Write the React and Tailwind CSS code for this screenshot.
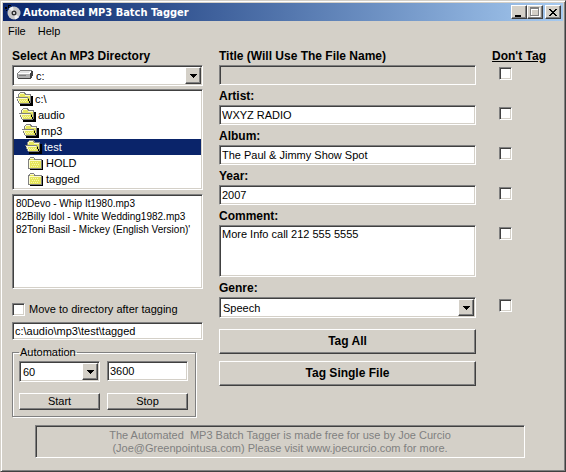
const sunken =
    'border border-t-[#808080] border-l-[#808080] border-r-white border-b-white shadow-[inset_1px_1px_#404040,inset_-1px_-1px_#d4d0c8]';
const raised =
    'border border-t-white border-l-white border-r-[#404040] border-b-[#404040] shadow-[inset_-1px_-1px_#808080]';

function OpenFolder() {
    return (
        <svg width="17" height="14" viewBox="0 0 17 14" shapeRendering="crispEdges" aria-hidden="true">
            <path d="M15 4h2v10H4v-2h11z" fill="#000" />
            <path d="M2 2h1V1h1V0h5v1h1v1h5v10H4L2 6z" fill="#808080" />
            <path d="M3 2h1V1h4v1h1v1h5v9H5L3 6z" fill="#e6e65c" />
            <path d="M4 1h4v1H4zM3 2h1v2H3zM9 3h5v1H9z" fill="#fcfcd0" />
            <path d="M0 5h12l3 7H3z" fill="#808080" />
            <path d="M1 6h11v1l2 4H4L3 9z" fill="#e6e65c" />
            <path d="M1 6h10v1H1zM2 7h1v2H2zM3 9h1v2H3z" fill="#fcfcd0" />
            <path d="M4 8h1v1H4zM6 8h1v1H6zM8 8h1v1H8zM10 8h1v1h-1zM5 9h1v1H5zM7 9h1v1H7zM9 9h1v1H9z" fill="#f8f8a8" />
            <path d="M12 7h1v2h-1zM13 9h1v2h-1zM14 11h1v1h-1z" fill="#000" />
        </svg>
    );
}

function ClosedFolder() {
    return (
        <svg width="15" height="13" viewBox="0 0 15 13" shapeRendering="crispEdges" aria-hidden="true">
            <path d="M2 3h13v10H2z" fill="#000" />
            <path d="M0 2h1V1h1V0h4v1h1v1h7v10H0z" fill="#808080" />
            <path d="M1 3h12v8H1zM2 1h4v2H2z" fill="#e6e65c" />
            <path d="M1 3h12v1H2v7H1zM2 1h4v1H2z" fill="#fcfcd0" />
            <path d="M3 5h1v1H3zM5 5h1v1H5zM7 5h1v1H7zM9 5h1v1H9zM4 7h1v1H4zM6 7h1v1H6zM8 7h1v1H8zM10 7h1v1h-1zM3 9h1v1H3zM5 9h1v1H5zM7 9h1v1H7zM9 9h1v1H9z" fill="#f8f8a8" />
        </svg>
    );
}

function DriveIcon() {
    return (
        <svg width="17" height="10" viewBox="0 0 17 10" shapeRendering="crispEdges" aria-hidden="true">
            <path d="M3 0h11l-3 4H0z" fill="#e4e4e4" />
            <path d="M3 0h12v1H3zM2 1h1v1H2zM1 2h1v1H1zM0 3h1v5H0z" fill="#808080" />
            <path d="M1 3h12v5H1z" fill="#b0b0b0" />
            <path d="M1 3h12v1H1z" fill="#fff" />
            <path d="M2 5h7v1H2z" fill="#808080" />
            <path d="M1 8h13v1H1zM13 3h1v5h-1zM14 1h1v7h-1zM15 1h1v5h-1z" fill="#404040" />
        </svg>
    );
}

function DiscIcon() {
    return (
        <svg width="16" height="16" viewBox="0 0 16 16" aria-hidden="true">
            <circle cx="9" cy="9" r="6.500" fill="#c8c8c8" />
            <path d="M9 9 4 4.500a7 7 0 0 1 4-2zM9 9l5 4a7 7 0 0 1-4 2.500z" fill="#efefef" />
            <circle cx="9" cy="9" r="2.500" fill="#303030" />
            <circle cx="9" cy="9" r="1" fill="#fff" />
            <path d="M0 3h2v2H0zM3 1h1v3H3zM4 1h2v1H4zM1 6h1v1H1z" fill="#000" />
        </svg>
    );
}

function Dropdown({ className = '', label, id, value, options, children }) {
    return (
        <div className={`relative h-[21px] bg-white ${sunken} ${className}`}>
            {children}
            <select
                id={id}
                aria-label={label}
                defaultValue={value}
                className={`block h-full w-full appearance-none bg-transparent pt-px pr-5 outline-none ${children ? 'pl-[23px]' : 'pl-[3px]'}`}
            >
                {options.map((o) => (
                    <option key={o}>{o}</option>
                ))}
            </select>
            <span
                className={`pointer-events-none absolute top-px right-px bottom-px flex w-4 items-center justify-center bg-[#d4d0c8] ${raised}`}
            >
                <svg width="7" height="4" viewBox="0 0 7 4" shapeRendering="crispEdges">
                    <path d="M0 0h7v1H0zM1 1h5v1H1zM2 2h3v1H2zM3 3h1v1H3z" />
                </svg>
            </span>
        </div>
    );
}

function Check({ id, label }) {
    return (
        <input
            id={id}
            type="checkbox"
            aria-label={label}
            className={`h-[13px] w-[13px] shrink-0 appearance-none bg-white checked:bg-[#0a246a] ${sunken}`}
        />
    );
}

function Field({ id, label, children }) {
    return (
        <div>
            <label htmlFor={id} className="block h-4 text-[12px] leading-[14px] font-bold">
                {label}
            </label>
            <div className="flex items-start">
                <div className="min-w-0 flex-1">{children}</div>
                <div className="flex w-[87px] justify-end pt-[2px] pr-[51px]">
                    <Check label={`Don't tag ${id}`} />
                </div>
            </div>
        </div>
    );
}

function TextBox({ className = '', ...props }) {
    return <input type="text" className={`block w-full px-[2px] outline-none ${sunken} ${className}`} {...props} />;
}

function PushButton({ className, children }) {
    return (
        <button type="button" className={`flex items-center justify-center ${raised} ${className}`}>
            {children}
        </button>
    );
}

const folders = [
    { name: 'c:\\', indent: 'pl-[2px]', open: true },
    { name: 'audio', indent: 'pl-[5px]', open: true },
    { name: 'mp3', indent: 'pl-[8px]', open: true },
    { name: 'test', indent: 'pl-[11px]', open: true, selected: true },
    { name: 'HOLD', indent: 'pl-[14px]' },
    { name: 'tagged', indent: 'pl-[14px]' },
];

const files = [
    '80Devo - Whip It1980.mp3',
    '82Billy Idol - White Wedding1982.mp3',
    "82Toni Basil - Mickey (English Version)'",
];

function TitleBar() {
    return (
        <header className="flex h-[18px] items-center bg-linear-to-r from-[#0a246a] to-[#a6caf0] px-[2px] text-white">
            <DiscIcon />
            <h1 className="ml-[2px] flex-1 font-['DejaVu_Sans_Condensed','DejaVu_Sans',sans-serif] text-[11px] font-bold whitespace-nowrap">
                Automated MP3 Batch Tagger
            </h1>
            <div className="flex text-black">
                <PushButton className="h-[14px] w-4 bg-[#d4d0c8]">
                    <svg width="10" height="10" viewBox="0 0 10 10" shapeRendering="crispEdges" role="img" aria-label="Minimize">
                        <path d="M1 8h6v2H1z" />
                    </svg>
                </PushButton>
                <PushButton className="h-[14px] w-4 bg-[#d4d0c8]">
                    <svg width="10" height="10" viewBox="0 0 10 10" shapeRendering="crispEdges" role="img" aria-label="Maximize">
                        <path d="M1 1h9v9H1zM2 3v6h7V3z" fill="#fff" fillRule="evenodd" />
                        <path d="M0 0h9v9H0zM1 2v6h7V2z" fill="#808080" fillRule="evenodd" />
                    </svg>
                </PushButton>
                <PushButton className="ml-[2px] h-[14px] w-4 bg-[#d4d0c8]">
                    <svg width="8" height="7" viewBox="0 0 8 7" shapeRendering="crispEdges" role="img" aria-label="Close">
                        <path d="M0 0h2v1H0zM6 0h2v1H6zM1 1h2v1H1zM5 1h2v1H5zM2 2h4v1H2zM3 3h2v1H3zM2 4h4v1H2zM1 5h2v1H1zM5 5h2v1H5zM0 6h2v1H0zM6 6h2v1H6z" />
                    </svg>
                </PushButton>
            </div>
        </header>
    );
}

export default function App() {
    return (
        <div className="min-h-screen border border-t-[#d4d0c8] border-r-[#404040] border-b-[#404040] border-l-[#d4d0c8] bg-[#d4d0c8] p-[2px] font-['Liberation_Sans',Arial,sans-serif] text-[11px] leading-[13px] text-black shadow-[inset_1px_1px_#fff,inset_-1px_-1px_#808080]">
            <TitleBar />

            <nav className="flex h-5 items-center gap-3 px-[5px]">
                <button type="button">File</button>
                <button type="button">Help</button>
            </nav>

            <main className="flex gap-4 pt-2 pl-[9px]">
                {/* Directories and files */}
                <section className="w-[191px] shrink-0">
                    <h2 className="h-4 text-[12px] leading-[14px] font-bold">Select An MP3 Directory</h2>
                    <Dropdown label="Drive" value="c:" options={['c:']}>
                        <span className="pointer-events-none absolute top-1 left-1">
                            <DriveIcon />
                        </span>
                    </Dropdown>

                    <ul className={`mt-[3px] h-[101px] bg-white px-px pt-px ${sunken}`}>
                        {folders.map((f) => (
                            <li
                                key={f.name}
                                className={`flex h-4 items-center ${f.indent} ${f.selected ? 'bg-[#0a246a] text-white' : ''}`}
                            >
                                {f.open ? <OpenFolder /> : <ClosedFolder />}
                                <span className={f.open ? 'ml-[2px]' : 'ml-[3px]'}>{f.name}</span>
                            </li>
                        ))}
                    </ul>

                    <ul className={`mt-1 h-[95px] overflow-hidden bg-white pt-[2px] pl-[3px] text-[10px] whitespace-nowrap ${sunken}`}>
                        {files.map((f) => (
                            <li key={f}>{f}</li>
                        ))}
                    </ul>

                    <div className="mt-[14px] flex items-center gap-1">
                        <Check id="move" />
                        <label htmlFor="move">Move to directory after tagging</label>
                    </div>
                    <TextBox
                        className="mt-[6px] h-[18px] bg-white"
                        aria-label="Target directory"
                        defaultValue="c:\audio\mp3\test\tagged"
                    />

                    {/* Automation */}
                    <fieldset className="mt-[6px] mr-[7px] border border-[#808080] pr-[7px] pb-[6px] pl-[6px] shadow-[1px_1px_#fff,inset_1px_1px_#fff]">
                        <legend className="px-px">Automation</legend>
                        <div className="grid grid-cols-2 gap-x-[7px] gap-y-[11px] pt-[2px]">
                            <Dropdown label="Interval" value="60" options={['30', '60', '120']} />
                            <TextBox className="h-5 bg-white" aria-label="Seconds" defaultValue="3600" />
                            <PushButton className="h-[17px]">Start</PushButton>
                            <PushButton className="h-[17px]">Stop</PushButton>
                        </div>
                    </fieldset>
                </section>

                {/* Tag fields */}
                <section className="relative flex min-w-0 flex-1 flex-col gap-1">
                    <h2 className="absolute top-0 right-[17px] text-[12px] leading-[14px] font-bold underline">Don't Tag</h2>
                    <Field id="title" label="Title (Will Use The File Name)">
                        <TextBox id="title" className="h-5" disabled />
                    </Field>
                    <Field id="artist" label="Artist:">
                        <TextBox id="artist" className="h-5 bg-white" defaultValue="WXYZ RADIO" />
                    </Field>
                    <Field id="album" label="Album:">
                        <TextBox id="album" className="h-5 bg-white" defaultValue="The Paul & Jimmy Show Spot" />
                    </Field>
                    <Field id="year" label="Year:">
                        <TextBox id="year" className="h-5 bg-white" defaultValue="2007" />
                    </Field>
                    <Field id="comment" label="Comment:">
                        <textarea
                            id="comment"
                            defaultValue="More Info call 212 555 5555"
                            className={`block h-[52px] w-full resize-none bg-white p-[2px] outline-none ${sunken}`}
                        />
                    </Field>
                    <Field id="genre" label="Genre:">
                        <Dropdown id="genre" value="Speech" options={['Speech', 'Rock', 'Pop']} />
                    </Field>
                    <div className="mt-[7px] mr-[87px] grid gap-[7px] text-[12px] font-bold">
                        <PushButton className="h-[25px]">Tag All</PushButton>
                        <PushButton className="h-[25px]">Tag Single File</PushButton>
                    </div>
                </section>
            </main>

            <footer className={`mt-2 mr-[38px] ml-8 h-[33px] pt-[3px] text-center whitespace-pre text-[#808080] ${sunken}`}>
                <p>The Automated  MP3 Batch Tagger is made free for use by Joe Curcio</p>
                <p>(Joe@Greenpointusa.com) Please visit www.joecurcio.com for more.</p>
            </footer>
        </div>
    );
}
